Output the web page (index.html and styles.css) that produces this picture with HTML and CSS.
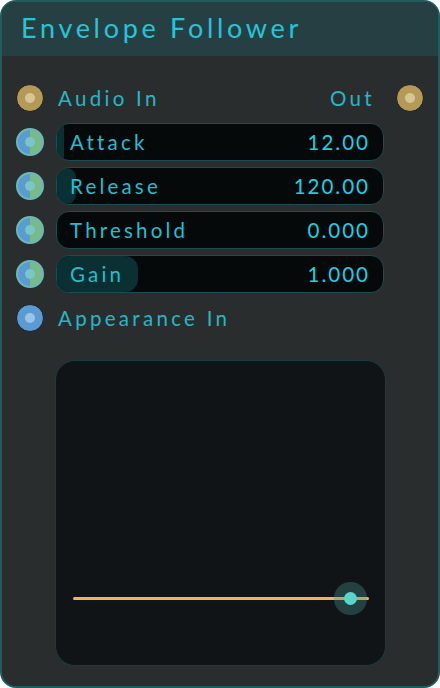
FILE: index.html
```html
<!DOCTYPE html>
<html lang="en">
<head>
  <meta charset="UTF-8">
  <meta name="viewport" content="width=device-width, initial-scale=1.0">
  <title>Envelope Follower</title>
  <link rel="stylesheet" href="styles.css">
</head>
<body>
  <div class="node">
    <!-- Cabeçalho -->
    <div class="node-title">Envelope Follower</div>

    <div class="node-body">
      <div class="row">
        <span class="socket socket-audio"></span>
        <span class="label">Audio In</span>
        <span class="label out">Out</span>
        <span class="socket socket-audio"></span>
      </div>

      <div class="row">
        <span class="socket socket-param"></span>
        <div class="slider">
          <div class="slider-fill" style="width: 7px"></div>
          <span class="slider-name">Attack</span>
          <span class="slider-value">12.00</span>
        </div>
      </div>

      <div class="row">
        <span class="socket socket-param"></span>
        <div class="slider">
          <div class="slider-fill" style="width: 19px"></div>
          <span class="slider-name">Release</span>
          <span class="slider-value">120.00</span>
        </div>
      </div>

      <div class="row">
        <span class="socket socket-param"></span>
        <div class="slider">
          <span class="slider-name">Threshold</span>
          <span class="slider-value">0.000</span>
        </div>
      </div>

      <div class="row">
        <span class="socket socket-param"></span>
        <div class="slider">
          <div class="slider-fill" style="width: 81px"></div>
          <span class="slider-name">Gain</span>
          <span class="slider-value">1.000</span>
        </div>
      </div>

      <div class="row">
        <span class="socket socket-look"></span>
        <span class="label">Appearance In</span>
      </div>

      <!-- Painel de visualização -->
      <div class="preview">
        <div class="track">
          <span class="thumb"></span>
        </div>
      </div>
    </div>
  </div>
</body>
</html>
```

FILE: styles.css
```css
body {
  margin: 0;
  padding: 0;
  background-color: #ffffff;
  font-family: Lato, "Open Sans", sans-serif;
}

.node {
  width: 440px;
  height: 688px;
  box-sizing: border-box;
  border: 2px solid #1f5c5e;
  border-radius: 16px;
  background-color: #2a2d2e;
  overflow: hidden;
  display: flex;
  flex-direction: column;
}

.node-title {
  height: 54px;
  box-sizing: border-box;
  padding: 9px 0 0 19px;
  background-color: #263f42;
  color: #22c6d6;
  font-size: 27px;
  letter-spacing: 3.7px;
}

.node-body {
  padding: 23px 14px 0 14px;
  display: flex;
  flex-direction: column;
  gap: 6px;
}

.row {
  display: flex;
  align-items: center;
  height: 38px;
}

.socket {
  width: 28px;
  height: 28px;
  border-radius: 50%;
  box-sizing: border-box;
  position: relative;
  flex-shrink: 0;
}

.socket::after {
  content: "";
  position: absolute;
  left: 50%;
  top: 50%;
  width: 10px;
  height: 10px;
  margin: -5px 0 0 -5px;
  border-radius: 50%;
}

.socket-audio {
  background-color: #b59a57;
  border: 1px solid #1c1d1c;
}

.socket-audio::after {
  background-color: #d6c595;
}

.socket-param {
  background: linear-gradient(90deg, #5a9bd2 50%, #77ba8c 50%);
  border: 2px solid #6cb8b8;
}

.socket-param::after {
  background-color: #7ac6c4;
}

.socket-look {
  background-color: #5a9bd4;
  border: 1px solid #1c1f22;
}

.socket-look::after {
  background-color: #9cc4e6;
}

.label {
  margin-left: 14px;
  color: #22b8c8;
  font-size: 20.5px;
  letter-spacing: 3.3px;
}

.label.out {
  margin-left: auto;
  margin-right: 21px;
}

.slider {
  position: relative;
  margin-left: 12px;
  width: 328px;
  height: 38px;
  box-sizing: border-box;
  border: 1px solid #1d4c50;
  border-radius: 13px;
  background-color: #05090a;
  overflow: hidden;
  display: flex;
  align-items: center;
  justify-content: space-between;
  padding: 0 13px 0 13px;
}

.slider-fill {
  position: absolute;
  left: 0;
  top: 0;
  bottom: 0;
  background-color: #0b3033;
  border-radius: 13px;
}

.slider-name,
.slider-value {
  position: relative;
  color: #20bfcf;
  font-size: 20.5px;
  letter-spacing: 3.2px;
}

.slider-value {
  color: #1cd0e0;
  letter-spacing: 2px;
}

.preview {
  margin: 17px 0 0 39px;
  width: 331px;
  height: 306px;
  box-sizing: border-box;
  border: 1px solid #1b3c3e;
  border-radius: 20px;
  background-color: #101417;
  display: flex;
  align-items: flex-end;
  padding: 0 16px 65px 17px;
}

.track {
  position: relative;
  width: 100%;
  height: 3px;
  border-radius: 2px;
  background-color: #f2b35a;
}

.thumb {
  position: absolute;
  right: 12px;
  top: 50%;
  width: 13px;
  height: 13px;
  margin-top: -6.5px;
  border-radius: 50%;
  background-color: #5dd5c6;
  box-shadow: 0 0 0 10px rgba(72, 150, 140, 0.35);
}
```
